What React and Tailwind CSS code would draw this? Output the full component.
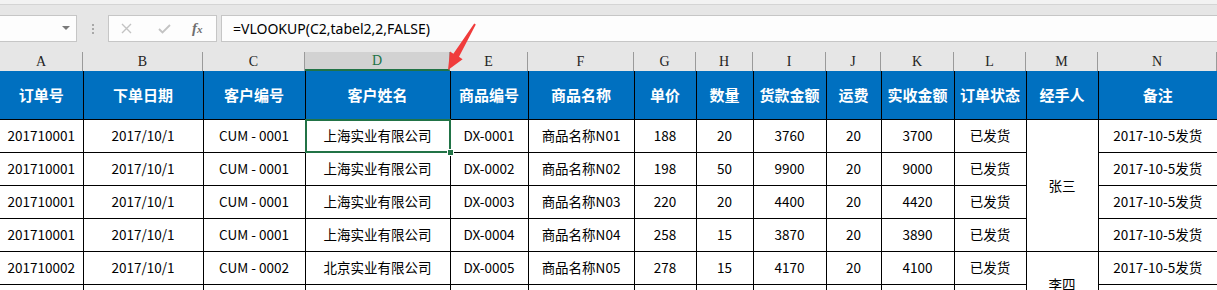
import React from 'react';

const cols = [
  { key: 'A', w: 'w-[83px]', title: '订单号' },
  { key: 'B', w: 'w-[120px]', title: '下单日期' },
  { key: 'C', w: 'w-[102px]', title: '客户编号' },
  { key: 'D', w: 'w-[145px]', title: '客户姓名' },
  { key: 'E', w: 'w-[78px]', title: '商品编号' },
  { key: 'F', w: 'w-[106px]', title: '商品名称' },
  { key: 'G', w: 'w-[62px]', title: '单价' },
  { key: 'H', w: 'w-[57px]', title: '数量' },
  { key: 'I', w: 'w-[73px]', title: '货款金额' },
  { key: 'J', w: 'w-[55px]', title: '运费' },
  { key: 'K', w: 'w-[73px]', title: '实收金额' },
  { key: 'L', w: 'w-[72px]', title: '订单状态' },
  { key: 'M', w: 'w-[72px]', title: '经手人' },
  { key: 'N', w: 'w-[119px]', title: '备注' },
];

// 每行: 订单号..订单状态 (M 列是合并单元格, 单独处理), 最后是备注
const rows = [
  ['201710001', '2017/10/1', 'CUM - 0001', '上海实业有限公司', 'DX-0001', '商品名称N01', '188', '20', '3760', '20', '3700', '已发货', '2017-10-5发货'],
  ['201710001', '2017/10/1', 'CUM - 0001', '上海实业有限公司', 'DX-0002', '商品名称N02', '198', '50', '9900', '20', '9000', '已发货', '2017-10-5发货'],
  ['201710001', '2017/10/1', 'CUM - 0001', '上海实业有限公司', 'DX-0003', '商品名称N03', '220', '20', '4400', '20', '4420', '已发货', '2017-10-5发货'],
  ['201710001', '2017/10/1', 'CUM - 0001', '上海实业有限公司', 'DX-0004', '商品名称N04', '258', '15', '3870', '20', '3890', '已发货', '2017-10-5发货'],
  ['201710002', '2017/10/1', 'CUM - 0002', '北京实业有限公司', 'DX-0005', '商品名称N05', '278', '15', '4170', '20', '4100', '已发货', '2017-10-5发货'],
  // 第 6 行只露出顶部几像素
  ['', '', '', '', '', '', '', '', '', '', '', '', ''],
];

const handlers = { 0: ['张三', 4], 4: ['李四', 2] };

const FormulaBar = () => (
  <div className="flex items-stretch h-[27px] mt-[10px]">
    {/* 名称框 */}
    <div className="w-[77px] bg-[#fdfdfd] border border-l-0 border-[#c6c6c6] flex items-center justify-end pr-[6px]">
      <svg width="8" height="5" viewBox="0 0 8 5">
        <path d="M0 0 H8 L4 4 Z" fill="#7a7a7a" />
      </svg>
    </div>
    <div className="w-[31px] flex flex-col items-center justify-center gap-[2px]">
      <span className="w-[2px] h-[2px] bg-[#a8a8a8]" />
      <span className="w-[2px] h-[2px] bg-[#a8a8a8]" />
      <span className="w-[2px] h-[2px] bg-[#a8a8a8]" />
    </div>
    <div className="w-[109px] bg-[#fdfdfd] border border-[#c6c6c6] flex items-center">
      <svg className="ml-[12px]" width="11" height="11" viewBox="0 0 11 11">
        <path d="M1 1 L10 10 M10 1 L1 10" stroke="#c3c3c3" strokeWidth="1.4" />
      </svg>
      <svg className="ml-[26px]" width="13" height="10" viewBox="0 0 13 10">
        <path d="M1 5 L4.5 8.5 L12 1" stroke="#c3c3c3" strokeWidth="1.8" fill="none" />
      </svg>
      <span className="ml-[21px] font-['Liberation_Serif',serif] italic font-bold text-[#6f6f6f] text-[15px] leading-none">
        f<span className="text-[11px]">x</span>
      </span>
    </div>
    <div className="flex-1 ml-[4px] bg-[#fdfdfd] border border-r-0 border-[#c6c6c6] flex items-center pl-[11px] text-[14px] text-black font-['Noto_Sans',sans-serif]">
      =VLOOKUP(C2,tabel2,2,FALSE)
    </div>
  </div>
);

const ColumnHeaders = () => (
  <div className="mt-[10px] h-[19px] grid grid-cols-[83px_120px_102px_145px_78px_106px_62px_57px_73px_55px_73px_72px_72px_119px] font-['Liberation_Serif',serif] text-[14px]">
    {cols.map((c) => (
      <div
        key={c.key}
        className={
          c.key === 'D'
            ? 'bg-[#d2d2d2] text-[#217346] border-r border-[#9a9a9a] border-b-2 border-b-[#217346] flex items-center justify-center leading-none'
            : 'text-[#222] border-r border-[#9a9a9a] flex items-center justify-center leading-none'
        }
      >
        {c.key}
      </div>
    ))}
  </div>
);

const Arrow = () => (
  <svg className="absolute left-0 top-0 pointer-events-none" width="1217" height="290">
    <polygon
      points="475.8,24.6 459,56.8 462.6,59.2 448,70 450,51.6 453.4,53.8 474.2,23.4"
      fill="#f03c3c"
    />
  </svg>
);

export default function App() {
  return (
    <div className="relative w-[1217px] h-[290px] overflow-hidden bg-[#e6e6e6] font-['Noto_Sans_CJK_SC',sans-serif]">
      <div className="h-[5px] bg-[#f2f2f2] border-b border-[#d4d4d4]" />
      <FormulaBar />
      <ColumnHeaders />

      <table className="w-[1217px] table-fixed border-collapse">
        <colgroup>
          {cols.map((c) => (
            <col key={c.key} className={c.w} />
          ))}
        </colgroup>
        <thead>
          <tr className="h-[48px] bg-[#0070c0]">
            {cols.map((c, i) => (
              <th
                key={c.key}
                className={`p-0 text-white font-bold text-[15px] border-x border-b border-black ${i === 0 ? 'border-l-0' : ''} ${i === cols.length - 1 ? 'border-r-0' : ''}`}
              >
                {c.title}
              </th>
            ))}
          </tr>
        </thead>
        <tbody className="bg-white text-black text-[13.5px]">
          {rows.map((r, ri) => (
            <tr key={ri} className="h-[33px]">
              {r.slice(0, 12).map((v, ci) => (
                <td
                  key={ci}
                  className={`p-0 text-center whitespace-nowrap border border-black ${ci === 0 ? 'border-l-0' : ''} ${ri === 0 && ci === 3 ? 'relative' : ''}`}
                >
                  {v}
                  {ri === 0 && ci === 3 && (
                    <>
                      <div className="absolute -left-px -top-px -right-px -bottom-px border-2 border-[#217346]" />
                      <div className="absolute -right-[4px] -bottom-[4px] w-[7px] h-[7px] bg-[#217346] border border-white" />
                    </>
                  )}
                </td>
              ))}
              {handlers[ri] && (
                <td rowSpan={handlers[ri][1]} className="p-0 text-center border border-black">
                  {handlers[ri][0]}
                </td>
              )}
              <td className="p-0 text-center whitespace-nowrap border border-black border-r-0">{r[12]}</td>
            </tr>
          ))}
        </tbody>
      </table>

      <Arrow />
    </div>
  );
}
